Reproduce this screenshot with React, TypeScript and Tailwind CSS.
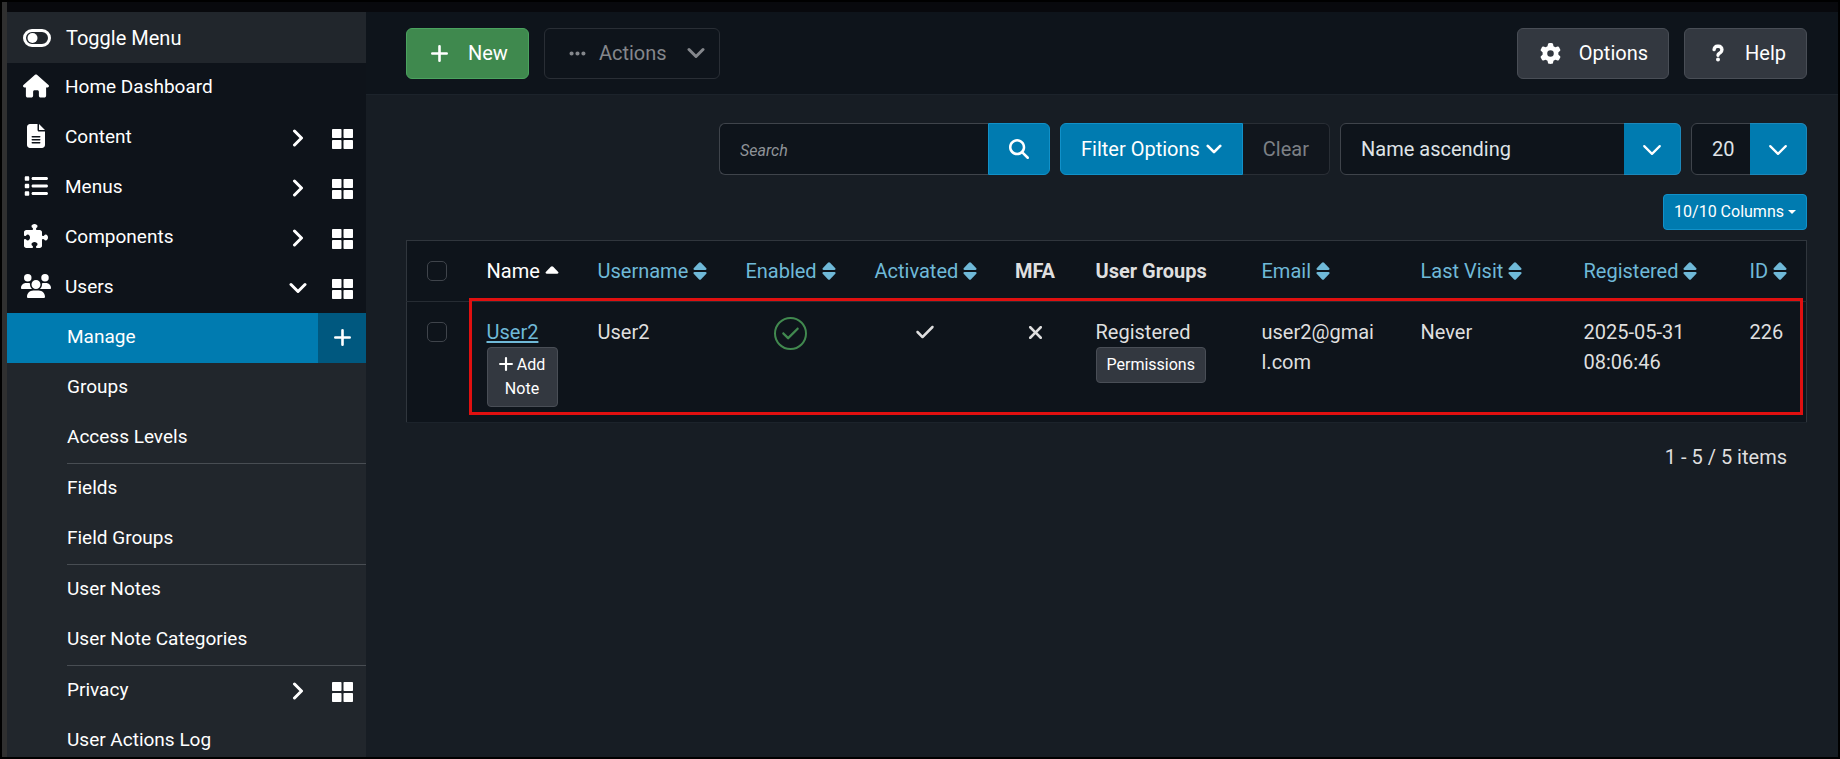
import {
    FaCheck,
    FaEllipsis,
    FaFileLines,
    FaGear,
    FaHouse,
    FaList,
    FaMagnifyingGlass,
    FaPuzzlePiece,
    FaQuestion,
    FaUsers,
    FaXmark,
} from "react-icons/fa6";

const mainMenu = [
    { label: "Home Dashboard", icon: <FaHouse size={26} />, sub: false },
    { label: "Content", icon: <FaFileLines size={24} />, sub: true },
    { label: "Menus", icon: <FaList size={24} />, sub: true },
    { label: "Components", icon: <FaPuzzlePiece size={24} />, sub: true },
    { label: "Users", icon: <FaUsers size={30} />, sub: true, open: true },
];

const userMenu = [
    { label: "Groups" },
    { label: "Access Levels" },
    { label: "Fields", divider: true },
    { label: "Field Groups" },
    { label: "User Notes", divider: true },
    { label: "User Note Categories" },
    { label: "Privacy", divider: true, sub: true },
    { label: "User Actions Log" },
];

const columns = [
    { label: "Name", sort: "asc", width: "w-[111px]", align: "text-left" },
    { label: "Username", sort: "both", width: "w-[141px]", align: "text-left" },
    { label: "Enabled", sort: "both", width: "w-[136px]", align: "text-center" },
    { label: "Activated", sort: "both", width: "w-[132px]", align: "text-center" },
    { label: "MFA", sort: "none", width: "w-[89px]", align: "text-center" },
    { label: "User Groups", sort: "none", width: "w-[166px]", align: "text-left" },
    { label: "Email", sort: "both", width: "w-[159px]", align: "text-left" },
    { label: "Last Visit", sort: "both", width: "w-[163px]", align: "text-left" },
    { label: "Registered", sort: "both", width: "w-[166px]", align: "text-left" },
    { label: "ID", sort: "both", width: "w-[73px]", align: "text-left" },
];

function ToggleIcon() {
    return (
        <svg width="28" height="18" viewBox="0 0 28 18" fill="none" aria-hidden="true">
            <rect x="1.5" y="1.5" width="25" height="15" rx="7.5" stroke="#fff" strokeWidth="3" />
            <circle cx="9.5" cy="9" r="5" fill="#fff" />
        </svg>
    );
}

function ChevronDown({ size = 18, stroke = 3 }: { size?: number; stroke?: number }) {
    return (
        <svg width={size} height={size} viewBox="0 0 18 18" fill="none" stroke="currentColor" strokeWidth={stroke} strokeLinecap="round" strokeLinejoin="round" aria-hidden="true">
            <path d="M2 5.5l7 7 7-7" />
        </svg>
    );
}

function ChevronRight() {
    return (
        <svg width="18" height="18" viewBox="0 0 18 18" fill="none" stroke="currentColor" strokeWidth="3" strokeLinecap="round" strokeLinejoin="round" aria-hidden="true">
            <path d="M5.5 2l7 7-7 7" />
        </svg>
    );
}

function PlusIcon({ size = 17, className }: { size?: number; className?: string }) {
    return (
        <svg width={size} height={size} viewBox="0 0 17 17" className={className} stroke="currentColor" strokeWidth="2.6" strokeLinecap="round" aria-hidden="true">
            <path d="M8.5 1.3v14.4M1.3 8.5h14.4" />
        </svg>
    );
}

function GridIcon() {
    return (
        <svg width="21" height="20" viewBox="0 0 21 20" fill="currentColor" aria-hidden="true">
            <rect width="9.5" height="9" rx="0.8" />
            <rect x="11.5" width="9.5" height="9" rx="0.8" />
            <rect y="11" width="9.5" height="9" rx="0.8" />
            <rect x="11.5" y="11" width="9.5" height="9" rx="0.8" />
        </svg>
    );
}

function SortIcon({ up }: { up?: boolean }) {
    return (
        <svg width="14" height="18" viewBox="0 0 14 18" fill="currentColor" className="mb-1 inline" aria-hidden="true">
            {up ? (
                <path d="M7 4.2q.7 0 1.2.5l5 5.3q.9 1.5-.9 1.8H1.7Q-.1 11.5.8 10l5-5.3Q6.3 4.2 7 4.2z" />
            ) : (
                <>
                    <path d="M7 .3q.6 0 1.1.5l5.2 5.5q.8 1.4-.8 1.7h-11Q-.1 7.7.7 6.3L5.9.8Q6.4.3 7 .3z" />
                    <path d="M7 17.7q.6 0 1.1-.5l5.2-5.5q.8-1.4-.8-1.7h-11q-1.6.3-.8 1.7l5.2 5.5q.5.5 1.1.5z" />
                </>
            )}
        </svg>
    );
}

function SubLinks({ label, open }: { label: string; open?: boolean }) {
    return (
        <>
            <button aria-label={`Expand ${label}`} className="flex w-10 justify-center">
                {open ? <ChevronDown /> : <ChevronRight />}
            </button>
            <a href="#" aria-label={`${label} Dashboard`} className="flex w-12 justify-center pt-[2px]">
                <GridIcon />
            </a>
        </>
    );
}

function Sidebar() {
    return (
        <nav className="w-[359px] shrink-0 bg-[#21262c] text-[19px] text-white">
            <button className="flex h-[51px] w-full items-center px-4 text-left text-xl">
                <span className="w-[43px]"><ToggleIcon /></span>
                Toggle Menu
            </button>
            <ul className="bg-[#0e131a]">
                {mainMenu.map((item) => (
                    <li key={item.label} className="flex h-[50px] items-center pb-px">
                        <a href="#" className="flex flex-1 items-center pl-3">
                            <span className="mr-3 flex w-[34px] justify-center pb-1">{item.icon}</span>
                            {item.label}
                        </a>
                        {item.sub && <SubLinks label={item.label} open={item.open} />}
                    </li>
                ))}
            </ul>
            <div className="flex h-[50px] bg-[#007bb0]">
                <a href="#" className="flex flex-1 items-center pb-px pl-[60px]">Manage</a>
                <a href="#" aria-label="Add User" className="flex w-12 items-center justify-center bg-[#00587f] pb-px">
                    <PlusIcon />
                </a>
            </div>
            <ul>
                {userMenu.map((item) => (
                    <li key={item.label} className="pl-[60px]">
                        <div className={item.divider ? "flex h-[51px] items-center border-t border-[#484d53] pb-px" : "flex h-[50px] items-center pb-px"}>
                            <a href="#" className="flex-1">{item.label}</a>
                            {item.sub && <SubLinks label={item.label} />}
                        </div>
                    </li>
                ))}
            </ul>
        </nav>
    );
}

function Toolbar() {
    return (
        <div className="flex h-[83px] items-center gap-[15px] border-b border-[#1c232b] bg-[#0e141b] pl-10 pr-[31px] text-xl text-white">
            <button className="flex h-[51px] items-center gap-5 rounded-md border border-[#4ba35f] bg-[#3f894e] px-5 pl-6">
                <PlusIcon />
                New
            </button>
            <button disabled className="flex h-[51px] items-center rounded-md border border-[#292e35] px-[14px] pl-[23px] text-[#84878c]">
                <FaEllipsis size={19} />
                <span className="ml-3 mr-5">Actions</span>
                <ChevronDown stroke={3} />
            </button>
            <button className="ml-auto flex h-[51px] items-center gap-[18px] rounded-md border border-[#494e56] bg-[#333840] px-5 pl-[22px]">
                <FaGear size={21} />
                Options
            </button>
            <button className="flex h-[51px] items-center gap-[18px] rounded-md border border-[#494e56] bg-[#333840] px-5 pl-[24px]">
                <FaQuestion size={18} stroke="currentColor" strokeWidth={30} />
                Help
            </button>
        </div>
    );
}

function Filters() {
    return (
        <div className="flex justify-end gap-[10px] text-xl">
            <div className="flex h-[52px]">
                <input
                    type="text"
                    aria-label="Search"
                    placeholder="Search"
                    className="w-[269px] rounded-l-md border border-r-0 border-[#3f444b] bg-[#0e141b] px-5 pt-1 text-base italic text-white placeholder:text-[#8f9398]"
                />
                <button aria-label="Search" className="flex w-[62px] items-center justify-center rounded-r-md border border-[#1191c9] bg-[#007bb0] text-white">
                    <FaMagnifyingGlass size={20} />
                </button>
            </div>
            <div className="flex h-[52px]">
                <button className="flex items-center gap-[6px] rounded-l-md border border-[#1191c9] bg-[#007bb0] px-5 text-white">
                    Filter Options
                    <ChevronDown size={16} />
                </button>
                <button disabled className="rounded-r-md border border-l-0 border-[#292e35] bg-[#11161d] px-5 text-[#7c8085]">Clear</button>
            </div>
            <div className="relative flex h-[52px]">
                <select aria-label="Sort Table By" className="w-[341px] appearance-none rounded-md border border-[#3f444b] bg-[#0e141b] pl-5 pr-16 text-[#dfe3e7]">
                    <option>Name ascending</option>
                </select>
                <SelectArrow />
            </div>
            <div className="relative flex h-[52px]">
                <select aria-label="Items per page" className="w-[116px] appearance-none rounded-md border border-[#3f444b] bg-[#0e141b] pl-5 pr-16 text-[#dfe3e7]">
                    <option>20</option>
                </select>
                <SelectArrow />
            </div>
        </div>
    );
}

function SelectArrow() {
    return (
        <span className="pointer-events-none absolute inset-y-0 right-0 flex w-[57px] items-center justify-center rounded-r-md border border-l-0 border-[#1c88bb] bg-[#007bb0] pt-[2px] text-white">
            <ChevronDown size={20} stroke={2} />
        </span>
    );
}

function UsersTable() {
    return (
        <div className="relative">
            <table className="w-full table-fixed border border-[#30363d] border-b-[#1c232b] bg-[#0e141b] text-xl leading-[30px] text-[#dfdfdf]">
                <thead>
                    <tr className="h-[61px] border-b border-[#262c33]">
                        <th className="w-16 pl-5 text-left">
                            <input type="checkbox" aria-label="Check All Items" className="block size-5 appearance-none rounded-[5px] border border-[#3f444b]" />
                        </th>
                        {columns.map((col) => (
                            <th key={col.label} className={`px-4 ${col.width} ${col.align} whitespace-nowrap`}>
                                {col.sort === "none" && col.label}
                                {col.sort === "asc" && (
                                    <a href="#" className="font-normal text-white">
                                        {col.label} <SortIcon up />
                                    </a>
                                )}
                                {col.sort === "both" && (
                                    <a href="#" className="font-normal text-[#6fb9d8]">
                                        {col.label} <SortIcon />
                                    </a>
                                )}
                            </th>
                        ))}
                    </tr>
                </thead>
                <tbody>
                    <tr className="h-[121px] align-top">
                        <td className="pl-5 pt-5">
                            <input type="checkbox" aria-label="Select User2" className="block size-5 appearance-none rounded-[5px] border border-[#3f444b]" />
                        </td>
                        <td className="px-4 pt-[15px]">
                            <a href="#" className="block text-[#6fb9d8] underline underline-offset-2">User2</a>
                            <button className="block w-[71px] rounded border border-[#494e56] bg-[#333840] px-2 py-[5px] text-base text-white">
                                <PlusIcon size={14} className="mb-[3px] inline" /> Add Note
                            </button>
                        </td>
                        <td className="px-4 pt-[15px]">User2</td>
                        <td className="px-4 pt-[15px]">
                            <button aria-label="Enabled" className="mx-auto flex size-[33px] items-center justify-center rounded-full border-2 border-[#41894f] text-[#41894f]">
                                <FaCheck size={19} />
                            </button>
                        </td>
                        <td className="px-4 pt-5"><FaCheck size={20} className="mx-auto" title="Activated" /></td>
                        <td className="px-4 pt-5"><FaXmark size={21} className="mx-auto" title="Not configured" /></td>
                        <td className="px-4 pt-[15px]">
                            <span className="block">Registered</span>
                            <button className="block h-9 rounded border border-[#494e56] bg-[#333840] px-[10px] text-base text-white">Permissions</button>
                        </td>
                        <td className="break-all pl-4 pr-7 pt-[15px]">user2@gmail.com</td>
                        <td className="px-4 pt-[15px]">Never</td>
                        <td className="px-4 pt-[15px]">2025-05-31 08:06:46</td>
                        <td className="px-4 pt-[15px]">226</td>
                    </tr>
                </tbody>
            </table>
            <div className="pointer-events-none absolute bottom-2 left-[63px] right-1 top-[58px] border-3 border-[#e01010]" />
        </div>
    );
}

export default function App() {
    return (
        <div className="h-screen overflow-hidden border-2 border-black bg-[#08090d] font-['Roboto',sans-serif]">
            <div className="flex h-full border-l-5 border-[#303030]">
                <div className="flex h-full flex-1 overflow-hidden border-t-10 border-[#08090d] bg-[#171d24]">
                    <Sidebar />
                    <main className="min-w-0 flex-1">
                        <Toolbar />
                        <div className="pl-10 pr-[31px] pt-7">
                            <Filters />
                            <div className="flex justify-end pb-[10px] pt-[19px]">
                                <button className="flex h-9 items-center gap-1 rounded border border-[#1191c9] bg-[#007bb0] px-[10px] text-base text-white">
                                    10/10 Columns
                                    <span className="border-x-4 border-t-4 border-x-transparent border-t-white" />
                                </button>
                            </div>
                            <UsersTable />
                            <p className="pr-5 pt-[19px] text-right text-xl leading-[30px] text-[#dfdfdf]">1 - 5 / 5 items</p>
                        </div>
                    </main>
                </div>
            </div>
        </div>
    );
}
